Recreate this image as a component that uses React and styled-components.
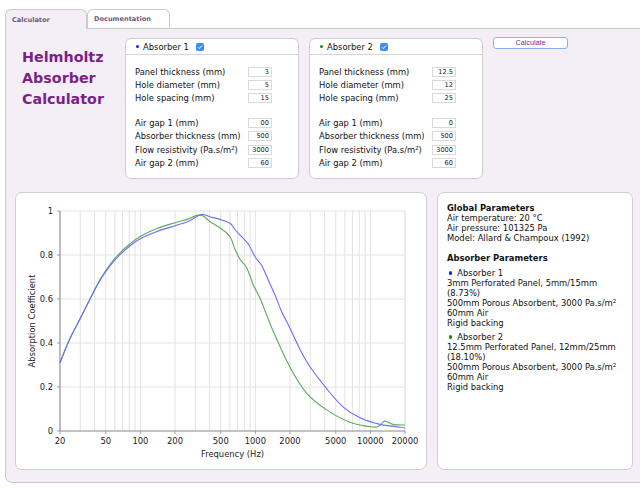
import React from 'react';
import styled, { createGlobalStyle } from 'styled-components';

const GlobalStyle = createGlobalStyle`
  html, body { margin: 0; padding: 0; background: #fff; overflow: hidden; }
  body { font-family: "DejaVu Sans", Verdana, sans-serif; font-size: 8.4px; color: #111; }
`;

const PANEL_BG = '#f4eff6';
const LINE = '#cdc8d1';

const Page = styled.div`
  width: 640px;
  height: 488px;
  overflow: hidden;
  padding: 9px 0 0 5px;
  box-sizing: border-box;
`;

const TabBar = styled.div`
  display: flex;
  align-items: flex-start;
  height: 19px;
`;

const Tab = styled.div`
  box-sizing: border-box;
  width: ${p => p.$w}px;
  height: ${p => (p.$active ? 20 : 19)}px;
  border: 1px solid ${LINE};
  border-bottom: none;
  border-radius: 6px 6px 0 0;
  background: ${p => (p.$active ? PANEL_BG : '#fff')};
  padding-left: 6px;
  display: flex;
  align-items: center;
  font-weight: bold;
  font-size: 6.6px;
  color: #6e5a80;
  position: relative;
  z-index: ${p => (p.$active ? 1 : 0)};
`;

const Panel = styled.div`
  box-sizing: border-box;
  width: 645px;
  height: 455px;
  border: 1px solid ${LINE};
  border-radius: 0 0 7px 7px;
  background: ${PANEL_BG};
  padding: 9px 0 0 9px;
`;

const Top = styled.div`
  display: grid;
  grid-template-columns: 100px 174px 174px 75px;
  column-gap: 10px;
  align-items: start;
`;

const Title = styled.h1`
  margin: 9px 0 0 0;
  padding-left: 7px;
  font-size: 14.3px;
  line-height: 21px;
  font-weight: bold;
  color: #7d1f88;
`;

const Card = styled.div`
  box-sizing: border-box;
  height: 141px;
  border: 1px solid #cfcfcf;
  border-radius: 6px;
  background: #fff;
`;

const CardHeader = styled.div`
  height: 15px;
  border-bottom: 1px solid #d6d6d6;
  display: flex;
  align-items: center;
  padding-left: 10px;
`;

const Dot = styled.span`
  display: inline-block;
  width: ${p => p.$size || 3}px;
  height: ${p => p.$size || 3}px;
  border-radius: 50%;
  background: ${p => p.$color};
  margin-right: ${p => p.$gap || 4}px;
  margin-left: ${p => p.$offset || 0}px;
  flex: none;
`;

const Check = styled.span`
  width: 8px;
  height: 8px;
  margin-left: 7px;
  border-radius: 2px;
  background: #3d8ef2;
  display: inline-flex;
  align-items: center;
  justify-content: center;
`;

const CardBody = styled.div`
  padding: 10px 0 0 9px;
`;

const FieldGroup = styled.div`
  display: grid;
  grid-template-columns: 113px 24px;
  grid-auto-rows: 13.3px;
  align-items: center;
  & + & { margin-top: 11.5px; }
`;

const Label = styled.span`
  white-space: nowrap;
`;

const Sup = styled.sup`
  font-size: 0.65em;
  line-height: 1;
  vertical-align: 0.5em;
`;

const NumInput = styled.input`
  box-sizing: border-box;
  width: 24px;
  height: 10px;
  border: 1px solid #d9d9d9;
  border-radius: 0;
  padding: 0 2px;
  margin: 0;
  font-family: "DejaVu Sans", Verdana, sans-serif;
  font-size: 6.6px;
  text-align: right;
  color: #222;
  background: #fff;
  outline: none;
`;

const CalcButton = styled.button`
  margin-top: -1px;
  height: 12px;
  width: 75px;
  padding: 0;
  border: 1px solid #86b3ee;
  border-radius: 3px;
  background: #fff;
  font-family: "Liberation Sans", Arial, sans-serif;
  font-size: 7.2px;
  color: #7b2a94;
  line-height: 10px;
`;

const Bottom = styled.div`
  display: flex;
  gap: 10px;
  margin-top: 13px;
`;

const ChartCard = styled.div`
  box-sizing: border-box;
  width: 412px;
  height: 278px;
  border: 1px solid #cfcfcf;
  border-radius: 7px;
  background: #fff;
  overflow: hidden;
`;

const InfoCard = styled.div`
  box-sizing: border-box;
  width: 196px;
  height: 278px;
  border: 1px solid #cfcfcf;
  border-radius: 7px;
  background: #fff;
  padding: 10px 6px 0 9px;
  line-height: 10px;
`;

const InfoHeading = styled.div`
  font-weight: bold;
  margin-top: ${p => p.$top || 0}px;
`;

const InfoItem = styled.div`
  display: flex;
  align-items: center;
  margin-top: ${p => p.$top || 0}px;
`;

const InfoLine = styled.div``;

const absorbers = [
  {
    name: 'Absorber 1',
    color: '#1a1aff',
    fields: [['3', '5', '15'], ['00', '500', '3000', '60']],
    desc: ['3mm Perforated Panel, 5mm/15mm (8.73%)'],
  },
  {
    name: 'Absorber 2',
    color: '#168a16',
    fields: [['12.5', '12', '25'], ['0', '500', '3000', '60']],
    desc: ['12.5mm Perforated Panel, 12mm/25mm (18.10%)'],
  },
];

const labels = [
  ['Panel thickness (mm)', 'Hole diameter (mm)', 'Hole spacing (mm)'],
  ['Air gap 1 (mm)', 'Absorber thickness (mm)', 'FLOW', 'Air gap 2 (mm)'],
];

const renderLabel = l =>
  l === 'FLOW' ? (
    <>Flow resistivity (Pa.s/m<Sup>2</Sup>)</>
  ) : (
    l
  );

function AbsorberCard({ a }) {
  return (
    <Card>
      <CardHeader>
        <Dot $color={a.color} />
        <span>{a.name}</span>
        <Check>
          <svg width="6" height="6" viewBox="0 0 6 6">
            <path d="M1 3.2 L2.4 4.6 L5 1.4" stroke="#fff" strokeWidth="1" fill="none" />
          </svg>
        </Check>
      </CardHeader>
      <CardBody>
        {labels.map((group, gi) => (
          <FieldGroup key={gi}>
            {group.map((l, i) => (
              <React.Fragment key={i}>
                <Label>{renderLabel(l)}</Label>
                <NumInput readOnly value={a.fields[gi][i]} />
              </React.Fragment>
            ))}
          </FieldGroup>
        ))}
      </CardBody>
    </Card>
  );
}

/* ---------- chart ---------- */
const W = 410, H = 276;
const PL = 44, PR = 389, PT = 18, PB = 238;
const xOf = f => PL + ((PR - PL) * Math.log10(f / 20)) / 3;
const yOf = a => PB - (PB - PT) * a;

const blueData = [
  [20, 0.31], [24.4, 0.42], [29.9, 0.51], [36.5, 0.6], [44.6, 0.685], [54.6, 0.752],
  [66.5, 0.802], [81.4, 0.842], [99.6, 0.874], [139, 0.907], [200, 0.933], [253, 0.95],
  [300, 0.97], [341, 0.985], [403, 0.974], [492, 0.962], [602, 0.944], [664, 0.916],
  [736, 0.89], [867, 0.85], [1000, 0.79], [1135, 0.752], [1295, 0.686], [1482, 0.618],
  [1694, 0.542], [2000, 0.467], [2500, 0.36], [3000, 0.29], [4200, 0.19], [5780, 0.11],
  [8130, 0.06], [12140, 0.03], [20000, 0.014],
];

const greenData = [
  [20, 0.31], [24.4, 0.42], [29.9, 0.51], [36.5, 0.6], [44.6, 0.688], [54.6, 0.758],
  [66.5, 0.81], [81.4, 0.851], [99.6, 0.884], [139, 0.92], [200, 0.947], [253, 0.962],
  [309, 0.98], [350, 0.978], [403, 0.951], [492, 0.924], [602, 0.883], [664, 0.826],
  [736, 0.78], [840, 0.742], [960, 0.664], [1097, 0.603], [1254, 0.527], [1436, 0.451],
  [2000, 0.29], [2812, 0.17], [4200, 0.095], [6650, 0.04], [10540, 0.018], [12000, 0.024],
  [13300, 0.045], [15740, 0.03], [20000, 0.027],
];

function smoothPath(data) {
  const p = data.map(([f, a]) => [xOf(f), yOf(a)]);
  const fmt = q => `${q[0].toFixed(2)},${q[1].toFixed(2)}`;
  let d = `M${fmt(p[0])}`;
  for (let i = 0; i < p.length - 1; i++) {
    const p0 = p[i - 1] || p[i];
    const p1 = p[i];
    const p2 = p[i + 1];
    const p3 = p[i + 2] || p2;
    const t = 1 / 6;
    const c1 = [p1[0] + (p2[0] - p0[0]) * t, p1[1] + (p2[1] - p0[1]) * t];
    const c2 = [p2[0] - (p3[0] - p1[0]) * t, p2[1] - (p3[1] - p1[1]) * t];
    d += ` C${fmt(c1)} ${fmt(c2)} ${fmt(p2)}`;
  }
  return d;
}

const gridFreqs = [];
[10, 100, 1000, 10000].forEach(dec => {
  for (let k = 1; k <= 9; k++) {
    const f = dec * k;
    if (f >= 20 && f <= 20000) gridFreqs.push(f);
  }
});
gridFreqs.push(20000);

const xLabels = [20, 50, 100, 200, 500, 1000, 2000, 5000, 10000, 20000];
const yLabels = [0, 0.2, 0.4, 0.6, 0.8, 1];

const ChartSvg = styled.svg`
  display: block;
  font-family: "DejaVu Sans", Verdana, sans-serif;
  font-size: 8.4px;
`;

function Chart() {
  return (
    <ChartSvg width={W} height={H} viewBox={`0 0 ${W} ${H}`}>
      {gridFreqs.map(f => (
        <line key={f} x1={xOf(f)} x2={xOf(f)} y1={PT} y2={PB} stroke="#e2e2e2" strokeWidth="1" />
      ))}
      {yLabels.filter(v => v > 0).map(v => (
        <line key={v} x1={PL} x2={PR} y1={yOf(v)} y2={yOf(v)} stroke="#e2e2e2" strokeWidth="1" />
      ))}
      {xLabels.map(f => (
        <line key={f} x1={xOf(f)} x2={xOf(f)} y1={PB} y2={PB + 3} stroke="#a0a0a0" strokeWidth="1" />
      ))}
      {yLabels.map(v => (
        <line key={v} x1={PL - 3} x2={PL} y1={yOf(v)} y2={yOf(v)} stroke="#a0a0a0" strokeWidth="1" />
      ))}
      <line x1={PL} x2={PL} y1={PT} y2={PB} stroke="#888" strokeWidth="1" />
      <line x1={PL} x2={PR} y1={PB} y2={PB} stroke="#888" strokeWidth="1" />
      <path d={smoothPath(greenData)} fill="none" stroke="#5caa5c" strokeWidth="1.1" />
      <path d={smoothPath(blueData)} fill="none" stroke="#6b6bff" strokeWidth="1.1" />
      {yLabels.map(v => (
        <text key={v} x={PL - 7} y={yOf(v)} textAnchor="end" dominantBaseline="central" fill="#222">
          {v}
        </text>
      ))}
      {xLabels.map(f => (
        <text key={f} x={xOf(f)} y={248} textAnchor="middle" dominantBaseline="central" fill="#222">
          {f}
        </text>
      ))}
      <text x={(PL + PR) / 2} y={261} textAnchor="middle" dominantBaseline="central" fill="#222">
        Frequency (Hz)
      </text>
      <text
        x={16}
        y={(PT + PB) / 2}
        textAnchor="middle"
        dominantBaseline="central"
        fill="#222"
        transform={`rotate(-90 16 ${(PT + PB) / 2})`}
      >
        Absorption Coefficient
      </text>
    </ChartSvg>
  );
}

function InfoPanel() {
  return (
    <InfoCard>
      <InfoHeading>Global Parameters</InfoHeading>
      <InfoLine>Air temperature: 20 °C</InfoLine>
      <InfoLine>Air pressure: 101325 Pa</InfoLine>
      <InfoLine>Model: Allard &amp; Champoux (1992)</InfoLine>
      <InfoHeading $top={10}>Absorber Parameters</InfoHeading>
      {absorbers.map((a, i) => (
        <React.Fragment key={a.name}>
          <InfoItem $top={i === 0 ? 5 : 4}>
            <Dot $color={a.color} $size={3.3} $gap={5} $offset={2} />
            <span>{a.name}</span>
          </InfoItem>
          {a.desc.map(d => (
            <InfoLine key={d}>{d}</InfoLine>
          ))}
          <InfoLine>
            500mm Porous Absorbent, 3000 Pa.s/m<Sup>2</Sup>
          </InfoLine>
          <InfoLine>60mm Air</InfoLine>
          <InfoLine>Rigid backing</InfoLine>
        </React.Fragment>
      ))}
    </InfoCard>
  );
}

export default function App() {
  return (
    <>
      <GlobalStyle />
      <Page>
        <TabBar>
          <Tab $w={82} $active>Calculator</Tab>
          <Tab $w={83}>Documentation</Tab>
        </TabBar>
        <Panel>
          <Top>
            <Title>
              Helmholtz
              <br />
              Absorber
              <br />
              Calculator
            </Title>
            {absorbers.map(a => (
              <AbsorberCard key={a.name} a={a} />
            ))}
            <CalcButton>Calculate</CalcButton>
          </Top>
          <Bottom>
            <ChartCard>
              <Chart />
            </ChartCard>
            <InfoPanel />
          </Bottom>
        </Panel>
      </Page>
    </>
  );
}
